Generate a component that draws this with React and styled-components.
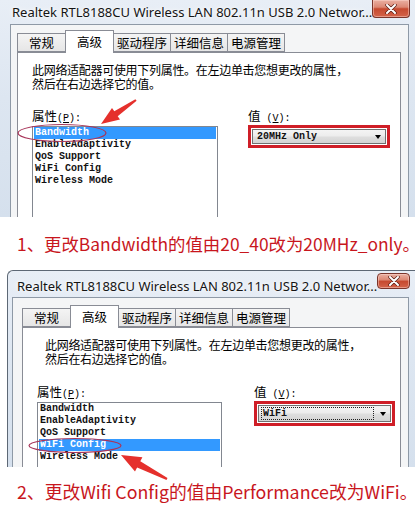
import React from 'react';
import styled, { createGlobalStyle } from 'styled-components';

const GlobalStyle = createGlobalStyle`
  html, body {
    margin: 0;
    padding: 0;
    background: #fff;
  }
  body {
    width: 420px;
    height: 515px;
    overflow: hidden;
    font-family: "Noto Sans CJK SC", sans-serif;
  }
  * {
    box-sizing: border-box;
  }
`;

const Page = styled.div`
  position: relative;
  width: 420px;
  height: 515px;
  background: #fff;
`;

const Window = styled.div`
  display: flex;
  flex-direction: column;
  width: ${(p) => p.$width}px;
  height: ${(p) => p.$height}px;
  margin-left: ${(p) => p.$left}px;
  overflow: hidden;
  background: linear-gradient(180deg, #e8eef6 0%, #dde6f1 45%, #d5e0ed 100%);
  border-left: ${(p) => (p.$edge ? '1px solid #5d6875' : 'none')};
  border-top: ${(p) => (p.$edge ? '1px solid #5d6875' : 'none')};
  border-top-left-radius: ${(p) => (p.$edge ? '6px' : '0')};
`;

const TitleBar = styled.div`
  display: flex;
  justify-content: space-between;
  align-items: flex-start;
  flex: none;
  height: ${(p) => p.$h}px;
  padding: 0 5px 0 ${(p) => p.$pad}px;
`;

const Title = styled.div`
  font-family: "Noto Sans", "Open Sans", sans-serif;
  font-size: 13px;
  line-height: ${(p) => p.$lh}px;
  color: #141414;
  white-space: nowrap;
  text-shadow: 0 0 6px #fff, 0 0 3px #fff;
`;

const CloseBtn = styled.div`
  display: flex;
  align-items: center;
  justify-content: center;
  width: 47px;
  height: ${(p) => p.$h}px;
  margin-top: ${(p) => p.$top}px;
  border: 1px solid #7a352b;
  border-top: ${(p) => (p.$top ? '1px solid #7a352b' : 'none')};
  border-radius: ${(p) => (p.$top ? '4px' : '0 0 4px 4px')};
  background: linear-gradient(180deg, #eab0a2 0%, #dc8874 42%, #c6492f 52%, #d4644a 100%);
  box-shadow: inset 0 0 0 1px rgba(255, 220, 210, 0.45);
`;

const Frame = styled.div`
  display: flex;
  flex-direction: column;
  flex: 1;
  margin: 0 6px 0 ${(p) => p.$inset}px;
  padding: ${(p) => p.$top}px 7px 0 ${(p) => p.$pad}px;
  border: 1px solid #8e99a6;
  border-bottom: none;
  background: #f4f5f6;
`;

const TabRow = styled.div`
  display: flex;
  align-items: flex-end;
  position: relative;
  z-index: 1;
`;

const Tab = styled.div`
  min-width: 49px;
  height: ${(p) => (p.$active ? 23 : 19)}px;
  margin-bottom: ${(p) => (p.$active ? -1 : 0)}px;
  margin-left: -1px;
  padding: ${(p) => (p.$active ? 2 : 0)}px 3px 0;
  border: 1px solid #898c95;
  border-bottom: ${(p) => (p.$active ? 'none' : '1px solid #898c95')};
  background: ${(p) => (p.$active ? '#fff' : 'linear-gradient(180deg, #f4f4f4 0%, #e6e6e6 100%)')};
  font-size: 12.5px;
  line-height: 18px;
  text-align: center;
  color: #000;
  position: relative;
  z-index: ${(p) => (p.$active ? 2 : 1)};

  &:first-child {
    margin-left: 0;
  }
`;

const Sheet = styled.div`
  flex: 1;
  padding: 10px 0 0 14px;
  border: 1px solid #898c95;
  border-bottom: none;
  background: #fff;
`;

const Desc = styled.div`
  padding-left: ${(p) => p.$indent}px;
  font-size: 12px;
  line-height: 14px;
  letter-spacing: -0.3px;
  color: #000;
`;

const Columns = styled.div`
  display: flex;
  gap: ${(p) => p.$gap}px;
  margin-top: ${(p) => p.$top}px;
`;

const Column = styled.div`
  display: flex;
  flex-direction: column;
  width: ${(p) => p.$w}px;
`;

const Label = styled.div`
  height: 15px;
  margin-bottom: ${(p) => p.$gap}px;
  font-size: 12.5px;
  line-height: 15px;
  color: #000;
  white-space: nowrap;

  span {
    font-family: "Liberation Mono", monospace;
    font-size: 10px;
  }
`;

const ListBox = styled.div`
  height: 200px;
  padding: 0 1px;
  border: 1px solid #828790;
  background: #fff;
`;

const Item = styled.div`
  height: 12px;
  padding-left: 1px;
  font-family: "Liberation Mono", monospace;
  font-size: 10px;
  font-weight: 700;
  line-height: 12px;
  white-space: pre;
  color: ${(p) => (p.$selected ? '#fff' : '#111')};
  background: ${(p) => (p.$selected ? '#3399ff' : 'transparent')};
`;

const ValueBox = styled.div`
  height: ${(p) => p.$h}px;
  padding: 1px;
  border: 3px solid #cf1e27;
  margin-top: -1px;
`;

const Combo = styled.div`
  display: flex;
  align-items: center;
  justify-content: space-between;
  height: 100%;
  padding: 0 4px 0 2px;
  border: 1px solid #707070;
  background: linear-gradient(180deg, #f4f4f4 0%, #ececec 48%, #dedede 52%, #d4d4d4 100%);
`;

const ComboText = styled.div`
  flex: 1;
  margin-right: 6px;
  padding-left: 1px;
  font-family: "Liberation Mono", monospace;
  font-size: 10px;
  font-weight: 700;
  line-height: 11px;
  color: #111;
  border: 1px ${(p) => (p.$focus ? 'dotted #222' : 'solid transparent')};
`;

const Arrow = styled.div`
  width: 0;
  height: 0;
  border-left: 3.5px solid transparent;
  border-right: 3.5px solid transparent;
  border-top: 4px solid #000;
`;

const Caption = styled.div`
  display: flex;
  align-items: center;
  height: ${(p) => p.$h}px;
  padding-left: 17px;
  font-family: "Noto Sans CJK SC", sans-serif;
  font-size: ${(p) => p.$size}px;
  color: #c8161d;
  white-space: nowrap;
`;

const Overlay = styled.svg`
  position: absolute;
  left: 0;
  top: 0;
  pointer-events: none;
`;

const TABS = ['常规', '高级', '驱动程序', '详细信息', '电源管理'];
const PROPS = ['Bandwidth', 'EnableAdaptivity', 'QoS Support', 'WiFi Config', 'Wireless Mode'];

function CloseGlyph() {
  return (
    <svg width="12" height="10" viewBox="0 0 12 10">
      <path d="M2 1 L10 9 M10 1 L2 9" stroke="#5a1d14" strokeWidth="3.4" strokeLinecap="round" />
      <path d="M2 1 L10 9 M10 1 L2 9" stroke="#fff" strokeWidth="2" strokeLinecap="round" />
    </svg>
  );
}

function Dialog({ cfg, selected, value, focus }) {
  return (
    <Window $width={cfg.width} $height={cfg.height} $left={cfg.left} $edge={cfg.edge}>
      <TitleBar $h={cfg.titleH} $pad={cfg.titlePad}>
        <Title $lh={cfg.titleLh}>Realtek RTL8188CU Wireless LAN 802.11n USB 2.0 Networ...</Title>
        <CloseBtn $h={cfg.closeH} $top={cfg.closeTop}>
          <CloseGlyph />
        </CloseBtn>
      </TitleBar>
      <Frame $inset={cfg.frameInset} $pad={cfg.framePad} $top={cfg.frameTop}>
        <TabRow>
          {TABS.map((t, i) => (
            <Tab key={t} $active={i === 1}>{t}</Tab>
          ))}
        </TabRow>
        <Sheet>
          <Desc $indent={cfg.descIndent}>
            此网络适配器可使用下列属性。在左边单击您想更改的属性，
            <br />
            然后在右边选择它的值。
          </Desc>
          <Columns $gap={cfg.gap} $top={cfg.colTop}>
            <Column $w={cfg.listW}>
              <Label $gap={3}>属性<span>(<u>P</u>):</span></Label>
              <ListBox>
                {PROPS.map((p) => (
                  <Item key={p} $selected={p === selected}>{p}</Item>
                ))}
              </ListBox>
            </Column>
            <Column $w={cfg.valueW}>
              <Label $gap={3}>值<span> (<u>V</u>):</span></Label>
              <ValueBox $h={cfg.valueH}>
                <Combo>
                  <ComboText $focus={focus}>{value}</ComboText>
                  <Arrow />
                </Combo>
              </ValueBox>
            </Column>
          </Columns>
        </Sheet>
      </Frame>
    </Window>
  );
}

const FIRST = {
  width: 415, height: 217, left: 0, edge: false,
  titleH: 24, titleLh: 24, titlePad: 12, closeH: 18, closeTop: 0,
  frameInset: 10, framePad: 6, frameTop: 5,
  descIndent: 0, gap: 30, colTop: 17, listW: 186, valueW: 142, valueH: 23,
};

const SECOND = {
  width: 408, height: 197, left: 7, edge: true,
  titleH: 26, titleLh: 30, titlePad: 9, closeH: 16, closeTop: 2,
  frameInset: 4, framePad: 9, frameTop: 7,
  descIndent: 8, gap: 32, colTop: 18, listW: 185, valueW: 141, valueH: 25,
};

export default function App() {
  return (
    <Page>
      <GlobalStyle />
      <Dialog cfg={FIRST} selected="Bandwidth" value="20MHz Only" />
      <Caption $h={53} $size={17.4}>1、更改Bandwidth的值由20_40改为20MHz_only。</Caption>
      <Dialog cfg={SECOND} selected="WiFi Config" value="WiFi" focus />
      <Caption $h={48} $size={17.8}>2、更改Wifi Config的值由Performance改为WiFi。</Caption>

      <Overlay width="420" height="515" viewBox="0 0 420 515">
        <ellipse cx="62" cy="133" rx="44" ry="8.5" fill="none" stroke="#a8365a" strokeWidth="1.2" />
        <polygon
          points="136.6,100.8 117.7,116.2 120,119.5 101,124 112,107.9 114.3,111.2 135.4,99.2"
          fill="#e5302c"
        />
        <ellipse cx="75" cy="445.5" rx="46" ry="7" fill="none" stroke="#a8365a" strokeWidth="1.2" />
        <polygon
          points="167.5,478.1 140.3,461.2 142.4,457.2 121,455 135,471.4 137.1,467.4 166.5,479.9"
          fill="#e5302c"
        />
      </Overlay>
    </Page>
  );
}
